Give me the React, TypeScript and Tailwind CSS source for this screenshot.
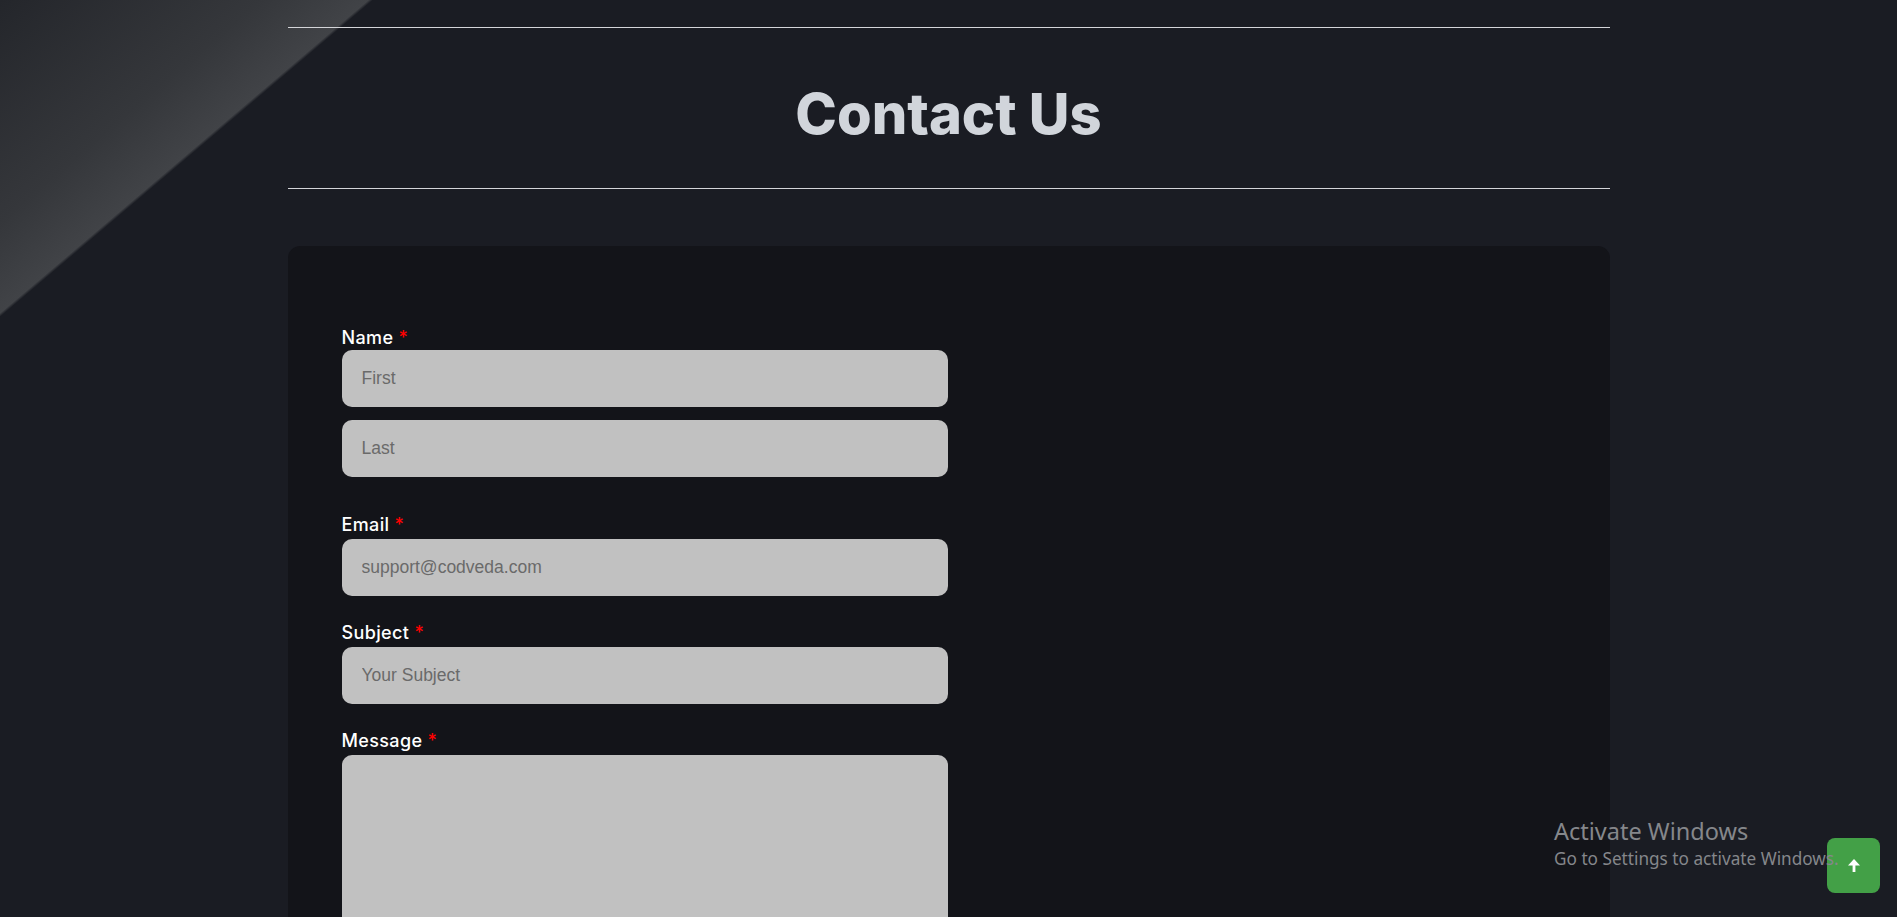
import React from "react";

const inputCls =
  "w-full h-[57px] rounded-[10px] bg-[#c1c1c1] px-[20px] text-[17.5px] text-[#333] placeholder:text-[#6a6a6a] outline-none font-['Liberation_Sans',Arial,sans-serif]";

function Label({ text, tight }: { text: string; tight?: boolean }) {
  return (
    <label
      className={
        "block text-[18px] leading-[24px] font-medium tracking-[0.02em] text-white font-['Inter',sans-serif] " +
        (tight ? "mb-0" : "mb-[2px]")
      }
    >
      {text} <span className="text-[#ff0000]">*</span>
    </label>
  );
}

export default function App() {
  return (
    <div className="relative h-[917px] overflow-hidden bg-[#1a1c23]">
      {/* glossy corner */}
      <div className="absolute top-0 left-0 w-[373px] h-[317px] bg-[linear-gradient(to_bottom_right,#24262b_0%,#35373b_35%,#414347_49.4%,transparent_50%)]" />

      <div className="relative mx-auto w-[1322px] pt-[27px]">
        <div className="h-px bg-[#d4d5d9]" />
        <div className="pt-[58px] pb-[46px] text-center">
          <h1 className="text-[56px] leading-none font-extrabold text-[#d1d5db] font-['Inter',sans-serif]">
            Contact Us
          </h1>
        </div>
        <div className="h-px bg-[#d4d5d9]" />

        <div className="mt-[57px] rounded-[12px] bg-[#131419] px-[54px] pt-[80px] pb-[60px]">
          <div className="grid grid-cols-2 gap-x-[2px]">
            <form className="flex flex-col gap-[25px]">
              <div className="mb-[11px]">
                <Label text="Name" tight />
                <div className="flex flex-col gap-[13px]">
                  <input className={inputCls} placeholder="First" />
                  <input className={inputCls} placeholder="Last" />
                </div>
              </div>
              <div>
                <Label text="Email" />
                <input className={inputCls} placeholder="support@codveda.com" />
              </div>
              <div>
                <Label text="Subject" />
                <input className={inputCls} placeholder="Your Subject" />
              </div>
              <div>
                <Label text="Message" />
                <textarea className="w-full h-[260px] rounded-[10px] bg-[#c1c1c1] px-[20px] py-[14px] text-[17.5px] outline-none resize-none font-['Liberation_Sans',Arial,sans-serif]" />
              </div>
            </form>
            <div />
          </div>
        </div>
      </div>

      <button className="absolute right-[17px] bottom-[24px] flex h-[55px] w-[53px] items-center justify-center rounded-[8px] bg-[#43a047]">
        <svg width="12" height="13" viewBox="0 0 12 13" fill="white">
          <polygon points="6,0 12,6.5 0,6.5" />
          <rect x="4.6" y="5" width="2.8" height="8" />
        </svg>
      </button>

      <div className="pointer-events-none absolute left-[1554px] top-[815px] text-[#85878b] font-['Noto_Sans',sans-serif]">
        <div className="text-[23.5px] leading-[32px]">Activate Windows</div>
        <div className="text-[17.2px] leading-[24px]">Go to Settings to activate Windows.</div>
      </div>
    </div>
  );
}
